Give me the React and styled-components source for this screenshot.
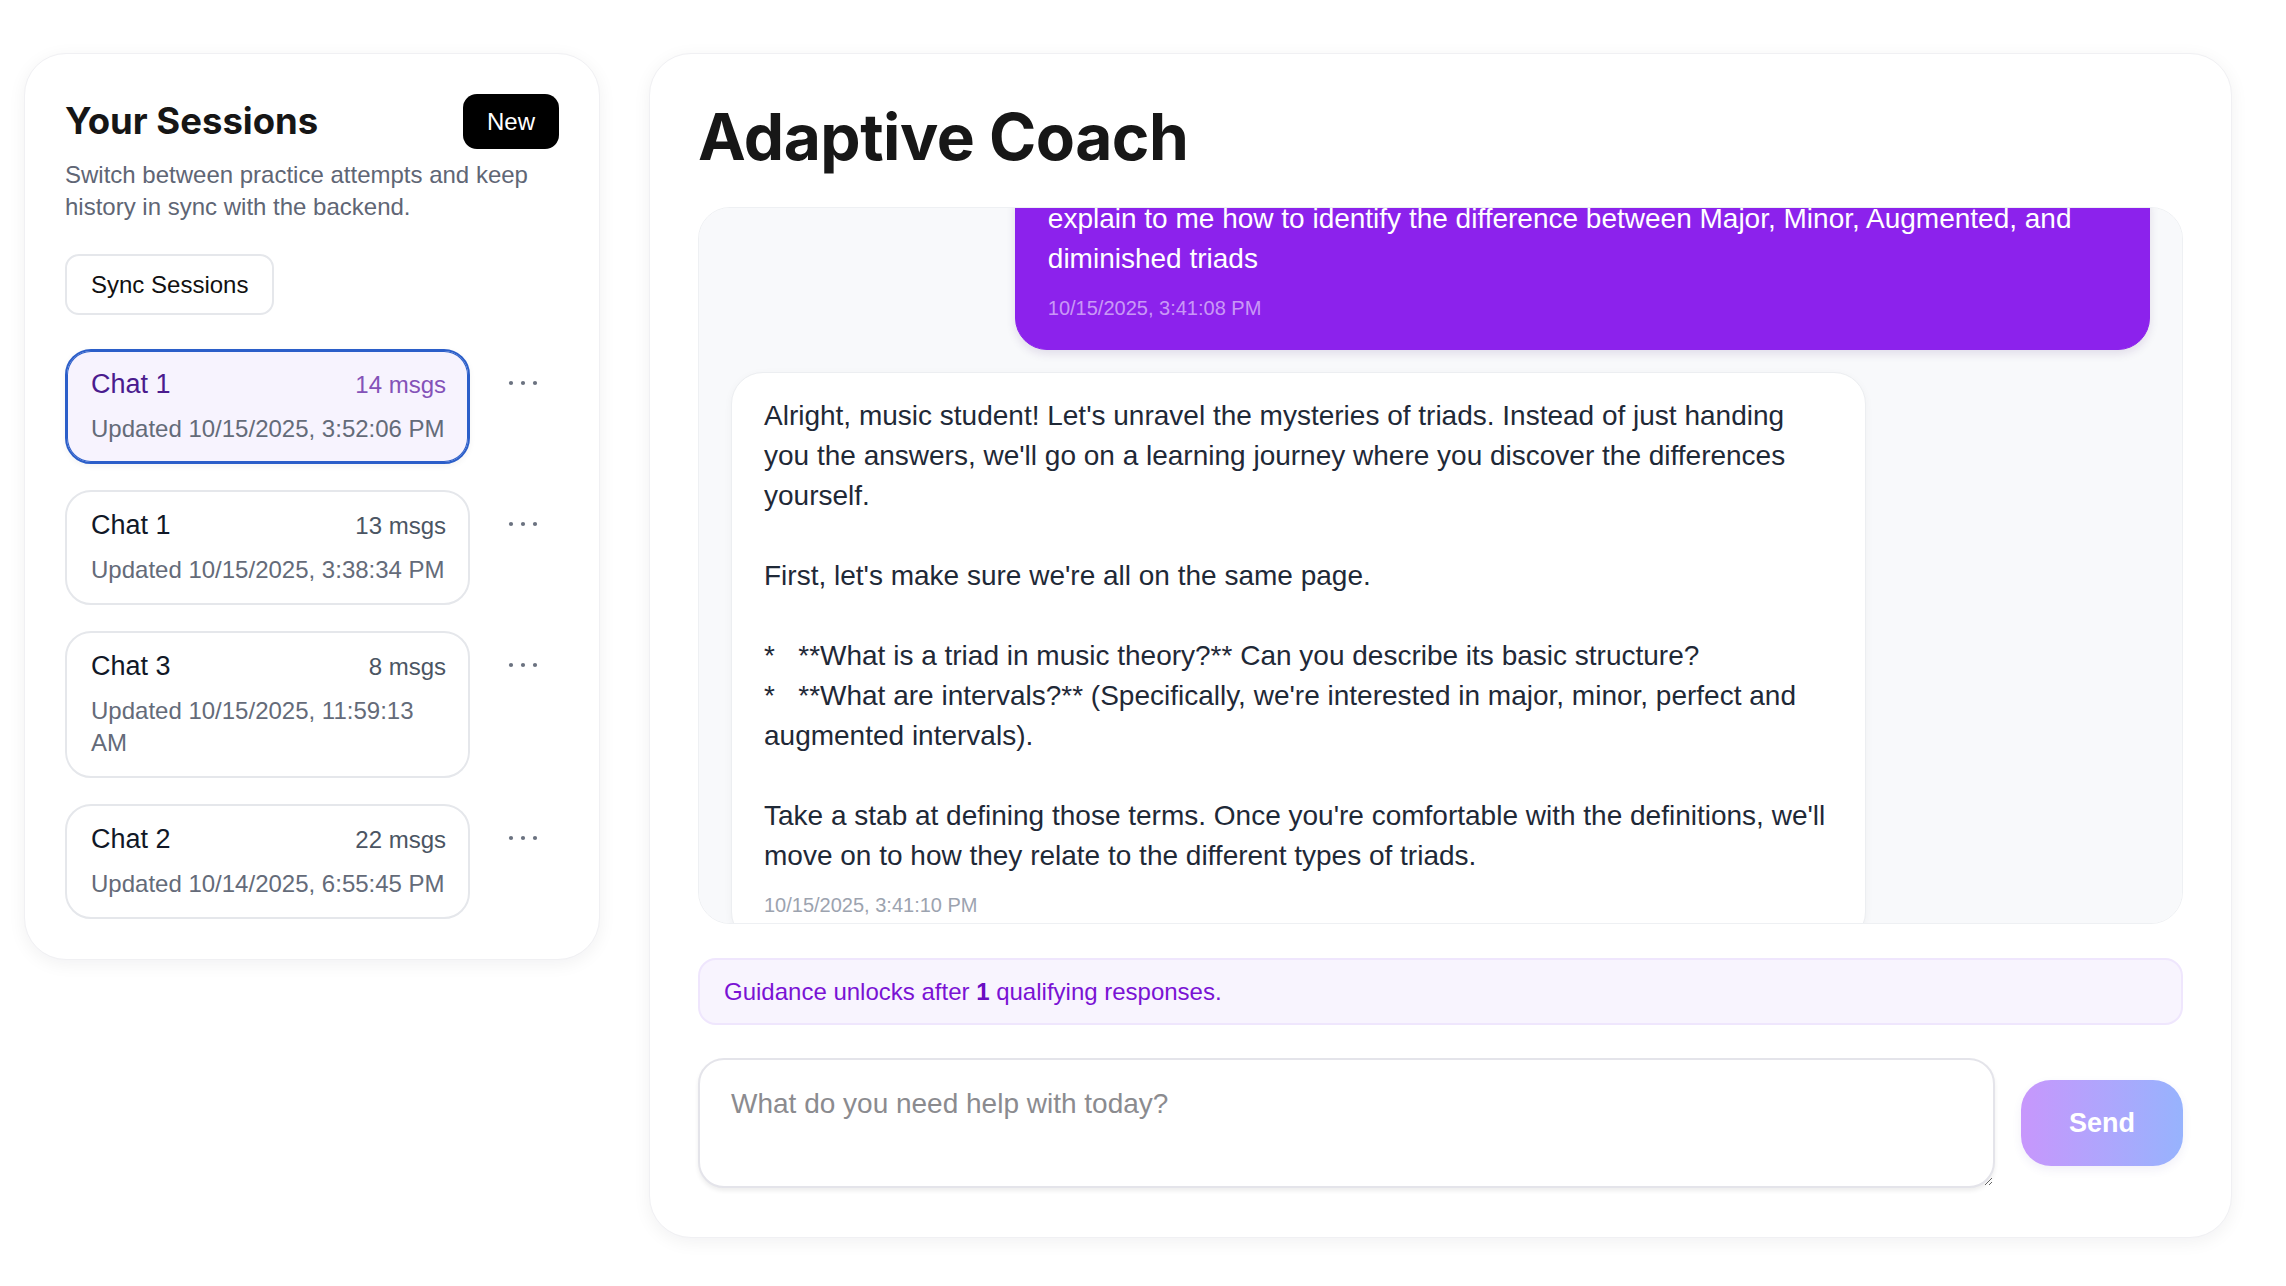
import React, { useLayoutEffect, useRef } from "react";
import styled, { createGlobalStyle } from "styled-components";

const sessions = [
  { id: "a", title: "Chat 1", count: 14, updated: "10/15/2025, 3:52:06 PM", active: true },
  { id: "b", title: "Chat 1", count: 13, updated: "10/15/2025, 3:38:34 PM" },
  { id: "c", title: "Chat 3", count: 8, updated: "10/15/2025, 11:59:13 AM" },
  { id: "d", title: "Chat 2", count: 22, updated: "10/14/2025, 6:55:45 PM" },
];

const messages = [
  {
    id: 1,
    role: "user",
    text: "explain to me how to identify the difference between Major, Minor, Augmented, and diminished triads",
    time: "10/15/2025, 3:41:08 PM",
  },
  {
    id: 2,
    role: "assistant",
    text: `Alright, music student! Let's unravel the mysteries of triads. Instead of just handing you the answers, we'll go on a learning journey where you discover the differences yourself.

First, let's make sure we're all on the same page.

*   **What is a triad in music theory?** Can you describe its basic structure?
*   **What are intervals?** (Specifically, we're interested in major, minor, perfect and augmented intervals).

Take a stab at defining those terms. Once you're comfortable with the definitions, we'll move on to how they relate to the different types of triads.`,
    time: "10/15/2025, 3:41:10 PM",
  },
];

function App() {
  const chatRef = useRef(null);

  useLayoutEffect(() => {
    if (chatRef.current) chatRef.current.scrollTop = 65;
  }, []);

  return (
    <>
      <GlobalStyle />
      <Page>
        <Sidebar>
          <SidebarHeader>
            <SidebarTitle>Your Sessions</SidebarTitle>
            <NewButton>New</NewButton>
          </SidebarHeader>
          <SidebarText>
            Switch between practice attempts and keep history in sync with the
            backend.
          </SidebarText>
          <SyncButton>Sync Sessions</SyncButton>

          <SessionList>
            {sessions.map((s) => (
              <SessionRow key={s.id}>
                <SessionCard $active={s.active}>
                  <SessionTop>
                    <SessionName $active={s.active}>{s.title}</SessionName>
                    <SessionCount $active={s.active}>{s.count} msgs</SessionCount>
                  </SessionTop>
                  <SessionUpdated>Updated {s.updated}</SessionUpdated>
                </SessionCard>
                <DotsButton aria-label="Session options">
                  <svg width="30" height="6" viewBox="0 0 30 6">
                    <circle cx="3" cy="3" r="2.1" fill="currentColor" />
                    <circle cx="15" cy="3" r="2.1" fill="currentColor" />
                    <circle cx="27" cy="3" r="2.1" fill="currentColor" />
                  </svg>
                </DotsButton>
              </SessionRow>
            ))}
          </SessionList>
        </Sidebar>

        <Main>
          <Heading>Adaptive Coach</Heading>
          <ChatArea ref={chatRef}>
            {messages.map((m) => (
              <Bubble key={m.id} $user={m.role === "user"}>
                <BubbleText>{m.text}</BubbleText>
                <Timestamp $user={m.role === "user"}>{m.time}</Timestamp>
              </Bubble>
            ))}
          </ChatArea>

          <Guidance>
            Guidance unlocks after <strong>1</strong> qualifying responses.
          </Guidance>

          <Composer>
            <Input placeholder="What do you need help with today?" />
            <SendButton disabled>Send</SendButton>
          </Composer>
        </Main>
      </Page>
    </>
  );
}

export default App;

const GlobalStyle = createGlobalStyle`
  * {
    box-sizing: border-box;
  }
  body {
    margin: 0;
    background: #ffffff;
    font-family: "Liberation Sans", Arial, sans-serif;
    color: #111827;
  }
`;

const Page = styled.div`
  display: grid;
  grid-template-columns: 576px 1fr;
  column-gap: 49px;
  align-items: start;
  padding: 53px 54px 40px 24px;
`;

const Card = styled.section`
  background: #fff;
  border: 1px solid #f0f0f3;
  border-radius: 42px;
  box-shadow: 0 4px 18px rgba(15, 23, 42, 0.06);
`;

const Sidebar = styled(Card)`
  padding: 40px;
  display: flex;
  flex-direction: column;
  align-items: flex-start;
`;

const SidebarHeader = styled.div`
  width: 100%;
  display: flex;
  justify-content: space-between;
  align-items: center;
`;

const SidebarTitle = styled.h2`
  margin: 0;
  font-family: Inter, "Liberation Sans", sans-serif;
  font-weight: 700;
  font-size: 36.5px;
  line-height: 43px;
  color: #161616;
`;

const NewButton = styled.button`
  border: 0;
  background: #000;
  color: #fff;
  border-radius: 14px;
  padding: 11.5px 24px;
  font-family: inherit;
  font-size: 24px;
  line-height: 32px;
  font-weight: 500;
  cursor: pointer;
`;

const SidebarText = styled.p`
  margin: 10px 0 0;
  font-size: 24px;
  line-height: 31.5px;
  color: #5f6675;
`;

const SyncButton = styled.button`
  margin-top: 32px;
  background: #fff;
  border: 2px solid #e5e7eb;
  border-radius: 14px;
  padding: 12.5px 24px;
  font-family: inherit;
  font-size: 24px;
  line-height: 32px;
  color: #111;
  cursor: pointer;
`;

const SessionList = styled.div`
  margin-top: 34px;
  display: flex;
  flex-direction: column;
  gap: 26px;
`;

const SessionRow = styled.div`
  display: grid;
  grid-template-columns: 405px 40px;
  column-gap: 33px;
  align-items: start;
`;

const SessionCard = styled.button`
  width: 100%;
  text-align: left;
  font-family: inherit;
  cursor: pointer;
  padding: 17px 22px 17px 24px;
  border-radius: 26px;
  border: 2px solid ${(p) => (p.$active ? "#2b5ec9" : "#e5e7eb")};
  background: ${(p) => (p.$active ? "#f7f3fe" : "#fff")};
  box-shadow: ${(p) =>
    p.$active
      ? "inset 0 0 0 1px #2b5ec9, 0 2px 6px rgba(0,0,0,0.05)"
      : "none"};
`;

const SessionTop = styled.div`
  display: flex;
  justify-content: space-between;
  align-items: baseline;
`;

const SessionName = styled.span`
  font-size: 27px;
  line-height: 32px;
  color: ${(p) => (p.$active ? "#4b1b8e" : "#111827")};
`;

const SessionCount = styled.span`
  font-size: 24px;
  line-height: 32px;
  color: ${(p) => (p.$active ? "#8452b8" : "#4b5563")};
`;

const SessionUpdated = styled.div`
  margin-top: 12px;
  font-size: 24px;
  line-height: 32px;
  color: #646b79;
`;

const DotsButton = styled.button`
  height: 68px;
  width: 40px;
  padding: 0;
  border: 0;
  background: none;
  color: #6b7280;
  display: flex;
  align-items: center;
  justify-content: center;
  cursor: pointer;
`;

const Main = styled(Card)`
  padding: 48px 48px 49px;
  display: flex;
  flex-direction: column;
`;

const Heading = styled.h1`
  margin: 0 0 35px;
  font-family: Inter, "Liberation Sans", sans-serif;
  font-weight: 700;
  font-size: 64px;
  line-height: 70px;
  letter-spacing: -0.5px;
  color: #171717;
`;

const ChatArea = styled.div`
  height: 717px;
  overflow-y: auto;
  scrollbar-width: none;
  background: #f8f9fb;
  border: 1px solid #eef0f3;
  border-radius: 32px;
  padding: 32px;
  display: flex;
  flex-direction: column;
  gap: 22px;
  &::-webkit-scrollbar {
    display: none;
  }
`;

const Bubble = styled.div`
  flex-shrink: 0;
  max-width: 80%;
  align-self: ${(p) => (p.$user ? "flex-end" : "flex-start")};
  padding: ${(p) => (p.$user ? "23px 32px 27px" : "23px 32px 24px")};
  border-radius: 32px;
  background: ${(p) => (p.$user ? "#8c22ec" : "#fff")};
  color: ${(p) => (p.$user ? "#fff" : "#1f2937")};
  border: 1px solid ${(p) => (p.$user ? "#8c22ec" : "#eceef1")};
  box-shadow: ${(p) =>
    p.$user ? "0 4px 10px rgba(60, 20, 110, 0.12)" : "0 2px 8px rgba(0,0,0,0.04)"};
`;

const BubbleText = styled.div`
  font-size: 28px;
  line-height: 40px;
  white-space: pre-wrap;
`;

const Timestamp = styled.div`
  margin-top: 15px;
  font-size: 20px;
  line-height: 28px;
  color: ${(p) => (p.$user ? "rgba(255,255,255,0.55)" : "#9ca3af")};
`;

const Guidance = styled.div`
  margin-top: 34px;
  padding: 13.5px 24px;
  border: 2px solid #efe6fd;
  background: #f8f4fe;
  border-radius: 18px;
  font-size: 24px;
  line-height: 36px;
  color: #7a12d4;

  strong {
    font-weight: 700;
    color: #6a0ec2;
  }
`;

const Composer = styled.div`
  margin-top: 33px;
  display: flex;
  align-items: center;
  gap: 26px;
`;

const Input = styled.textarea`
  flex: 1;
  height: 130px;
  padding: 24px 31px;
  border: 2px solid #e4e4ea;
  border-radius: 26px;
  box-shadow: 0 3px 4px rgba(0, 0, 0, 0.07);
  font-family: inherit;
  font-size: 28px;
  line-height: 40px;
  color: #111827;
  resize: vertical;
  outline: none;

  &::placeholder {
    color: #8b8b8f;
  }
`;

const SendButton = styled.button`
  width: 162px;
  height: 86px;
  border: 0;
  border-radius: 30px;
  background: linear-gradient(90deg, #c797fc 0%, #97b3fd 100%);
  box-shadow: 0 4px 10px rgba(80, 60, 160, 0.08);
  color: #fff;
  font-family: inherit;
  font-weight: 700;
  font-size: 27px;
  cursor: not-allowed;
`;
